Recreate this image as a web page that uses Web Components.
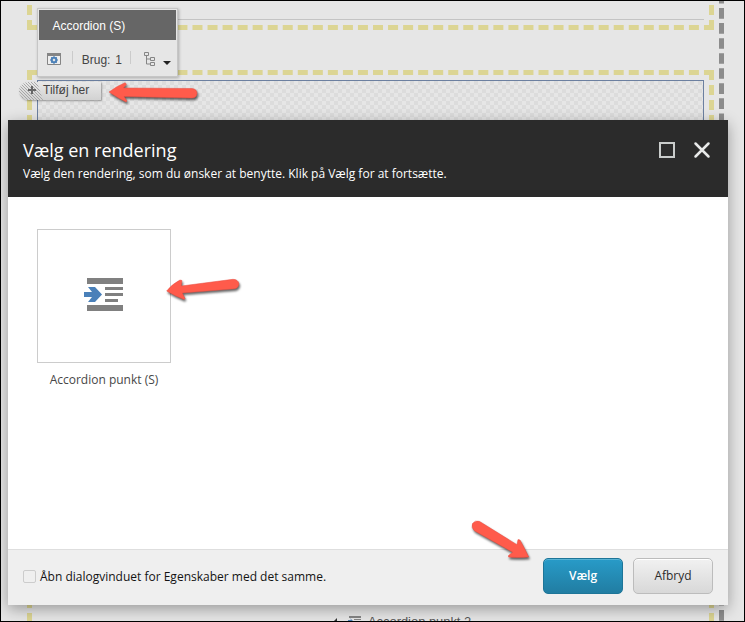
<!DOCTYPE html>
<html lang="da"><head><meta charset="utf-8"><title>Vælg en rendering</title>
<style>html,body{margin:0;width:745px;height:622px;overflow:hidden}</style></head><body>
<page-editor></page-editor>
<script>
const define=(name,html)=>customElements.define(name,class extends HTMLElement{
  constructor(){super();const t=document.createElement('template');t.innerHTML=html;this.attachShadow({mode:'open'}).append(t.content.cloneNode(true));}
});
define('editor-outline',`<style>:host{display:block;width:745px;height:622px}svg{display:block}</style>
<svg width="745" height="622" fill="none">
<defs><pattern id="c" x="38" y="81" width="8" height="8" patternUnits="userSpaceOnUse"><path fill="#dcdcdc" d="M4 0h4v4H4zM0 4h4v4H0z"/></pattern></defs>
<path d="M38 19.5H704" stroke="#c4c4c4"/>
<g stroke="#dcd593" stroke-width="5">
<path d="M27 27.5H714M27 72.5H714" stroke-dasharray="10 5.044"/>
<path d="M29.5 5V30M711.5 5V30M29.5 70V600M711.5 70V600" stroke-dasharray="10 5"/><path d="M29.5 598V622M711.5 598V622" stroke-dasharray="10 5"/></g>
<path d="M721.5 -7V622" stroke="#8c8c8c" stroke-width="5" stroke-dasharray="10.6 4.45"/>
<rect x="37.5" y="80.5" width="666" height="500" fill="url(#c)" stroke="#6c80a0"/>
</svg>`);
define('component-toolbar',`<style>:host{display:block;box-sizing:border-box;width:141px;height:69px;border:1px solid #c6c6c6;background:#e6e6e6;padding:1px;box-shadow:1px 1px 3px #0004;font:12px "Liberation Sans",Arial,sans-serif;color:#444}
.h{height:30px;background:#666;color:#fff;line-height:32px;padding-left:13.5px}.r{display:flex;align-items:center;height:36px}
i{width:1px;height:13px;background:#cbcbcb;margin-top:-2px}span{white-space:pre;position:relative;top:1.5px;word-spacing:1.5px}svg{display:block}</style>
<div class="h"><slot></slot></div><div class="r">
<svg width="33" height="36"><path d="M8.5 13.5h13v11h-13z" fill="#eee" stroke="#858585"/><path d="M8 13h14v3H8z" fill="#858585"/><circle cx="15" cy="20" r="2.3" fill="none" stroke="#4b80b8" stroke-width="2"/><path d="M15 16v8M11 20h8M12.2 17.2l5.6 5.6M17.8 17.2l-5.6 5.6" stroke="#4b80b8"/><circle cx="15" cy="20" r="1.2" fill="#e6e6e6"/></svg><i></i><span style="margin-left:9px;width:49px">Brug: 1</span><i></i>
<svg width="45" height="36" fill="none" stroke="#858585"><path d="M13.5 12.5h4v3h-4zM19.5 17.5h4v3h-4zM19.5 22.5h4v3h-4zM15.5 15.5v8.5h4M15.5 19h4"/><path d="M32 21h8l-4 4z" fill="#222" stroke="none"/></svg></div>`);
define('add-here',`<style>:host{display:flex;align-items:center;width:82px;height:18px;border-radius:9px 0 0 9px;background:linear-gradient(#e8e8e8,#d2d2d2);box-shadow:1px 1px 2px #0005;font:12px "Liberation Sans",Arial,sans-serif;color:#444;box-sizing:border-box}
svg{display:block}span{margin-top:-2px}</style><svg width="24" height="18"><defs><pattern id="h" width="3" height="3" patternUnits="userSpaceOnUse"><path d="M0 0l3 3M-1 2l2 2M2-1l2 2" stroke="#999" stroke-width=".8"/></pattern></defs><path d="M9 0h9l6 18H9A9 9 0 0 1 9 0z" fill="url(#h)"/><path d="M9 8h8M13 4v8" stroke="#666" stroke-width="2"/></svg><span><slot></slot></span>`);
define('list-peek',`<style>:host{display:flex;gap:6px;height:7px;overflow:hidden;font:12.9px/14px "Liberation Sans",Arial,sans-serif;color:#555}svg{display:block}</style>
<svg width="29" height="14"><path d="M4 3v4H0z" fill="#333"/><path d="M16 1h12v2H16zM21 4h7v1h-7zM21 6h7v1h-7z" fill="#858585"/><path d="M15 5h3l-1-2 4 4h-6z" fill="#4b80b8"/></svg><slot></slot>`);
define('rendering-tile',`<style>:host{display:block;width:134px;font:12px "Open Sans",sans-serif;color:#474747;text-align:center}.b{box-sizing:border-box;width:134px;height:134px;border:1px solid #ccc;background:#fff}svg{display:block}p{margin:8px 0 0;line-height:17px}</style>
<div class="b"><svg width="132" height="132"><path d="M49 48h36v6H49zM49 75h36v6H49zM67 57h18v3H67zM67 63h18v3H67zM67 69h13v3H67z" fill="#808080"/><path d="M46 62h8l-4-5h7l7 7.5-7 7.5h-7l4-5h-8z" fill="#4a80b9"/></svg></div><p><slot></slot></p>`);
define('action-button',`<style>:host{display:block;box-sizing:border-box;width:80px;height:36px;border:1px solid #bcbcbc;border-radius:5px;background:linear-gradient(#f1f1f1,#d8d8d8);box-shadow:inset 0 1px #fff;font:12px/34px "Open Sans",sans-serif;text-align:center;color:#2c2c2c}
:host([primary]){background:linear-gradient(#289bc8,#217da2);border-color:#1d7598;box-shadow:inset 0 1px #58b3d5;color:#fff;font-weight:600}</style><slot></slot>`);
define('rendering-dialog',`<style>:host{display:flex;flex-direction:column;width:720px;height:485px;background:#fff;box-shadow:0 4px 14px #0005;font:12px "Open Sans",sans-serif}
header{height:77px;background:#2b2b2b;color:#fff;display:flex;justify-content:space-between;box-sizing:border-box;padding:17px 17px 0 15px}
h1{font-size:18px;font-weight:400;line-height:26px;margin:0}p{margin:2px 0 0;line-height:17px}
main{flex:1;padding:32px 29px}footer{height:56px;box-sizing:border-box;border-top:1px solid #dedede;background:#efefef;display:flex;align-items:center;padding:0 15px 3px;gap:10px}
label{display:flex;align-items:center;gap:4px;margin-right:auto;color:#131313}label i{box-sizing:border-box;width:13px;height:13px;border:1px solid #ccc;border-radius:2px}svg{display:block}</style>
<header><div><h1><slot name="title"></slot></h1><p><slot name="hint"></slot></p></div><svg width="54" height="32" fill="none"><path d="M3 6h14v14H3z" stroke="#c9cccb" stroke-width="2"/><path d="M38.5 6.5l13 13M51.5 6.5l-13 13" stroke="#e8eae9" stroke-width="2.5" stroke-linecap="round"/></svg></header>
<main><slot></slot></main><footer><label><i></i><span><slot name="option"></slot></span></label><slot name="actions"></slot></footer>`);
define('callout-arrows',`<style>:host{display:block;pointer-events:none}svg{display:block;filter:drop-shadow(1.5px 2.5px 1.2px #0009)}</style>
<svg width="745" height="622" fill="#ff5b4b" stroke="#e94d40" stroke-width=".5" stroke-linejoin="round">
<path d="M109 92Q117 86 125 82.7L126.5 84 123.5 88 192 88.5Q197 89 197 93.5 196.5 98 192 98L124 96.5 127 101 126 102Q118 98 109 92z"/>
<path d="M166.7 291Q172 284 180 280L182 280.5 181.3 286 233 279.3Q238 279.5 238.9 283.5 239 287.5 235 288.8L182.3 293 185 298.5 184 299.5Q175 296 166.7 291z"/>
<path d="M528.7 557Q524 547 520 540L518 539.5 517 544.7 479.3 521.3Q475 520 472.5 523.5 471 527.5 474.3 530.7L512.7 552.3 508.5 555.5 508.5 557Q518 558 528.7 557z"/></svg>`);
define('page-editor',`<style>:host{display:block;position:relative;box-sizing:border-box;width:745px;height:622px;background:#e6e6e6;overflow:hidden}
:host>*{position:absolute}editor-outline,callout-arrows{left:0;top:0}component-toolbar{left:37px;top:8px}add-here{left:19px;top:82px}rendering-dialog{left:8px;top:120px}list-peek{left:333px;top:615px}.frame{inset:0;border:1px solid #000;pointer-events:none}</style>
<editor-outline></editor-outline><component-toolbar>Accordion (S)</component-toolbar><add-here>Tilføj her</add-here>
<list-peek>Accordion punkt 2</list-peek>
<rendering-dialog><span slot="title">Vælg en rendering</span><span slot="hint">Vælg den rendering, som du ønsker at benytte. Klik på Vælg for at fortsætte.</span><rendering-tile>Accordion punkt (S)</rendering-tile><span slot="option">Åbn dialogvinduet for Egenskaber med det samme.</span><action-button slot="actions" primary>Vælg</action-button><action-button slot="actions">Afbryd</action-button></rendering-dialog>
<callout-arrows></callout-arrows><div class="frame"></div>`);
</script></body></html>
